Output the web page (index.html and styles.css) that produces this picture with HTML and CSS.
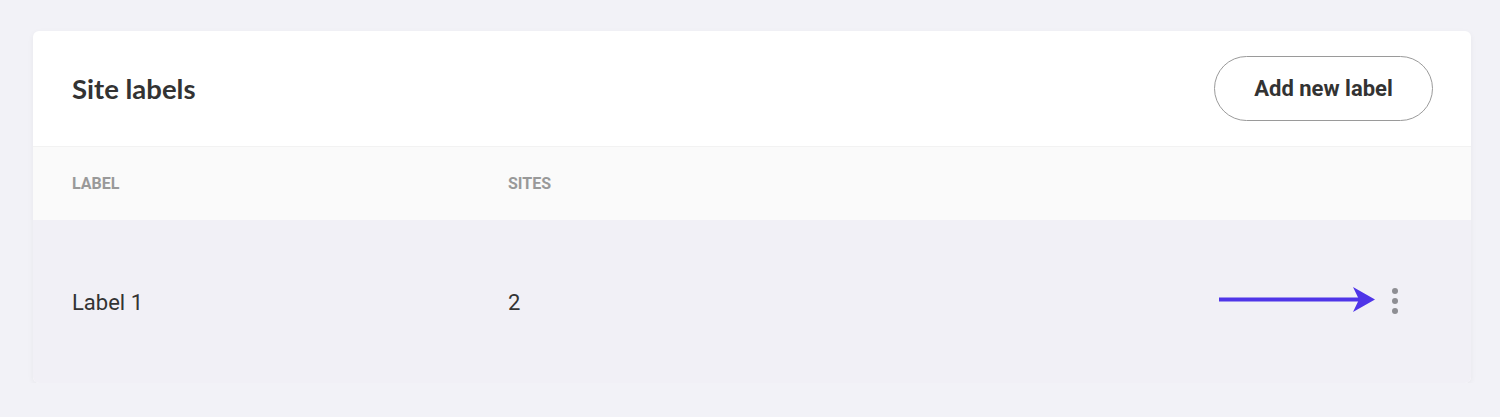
FILE: index.html
```html
<!DOCTYPE html>
<html lang="en">
<head>
<meta charset="UTF-8">
<meta name="viewport" content="width=device-width, initial-scale=1.0">
<title>Site labels</title>
<link rel="stylesheet" href="styles.css">
</head>
<body>

<div class="card">
  <div class="card-header">
    <h2>Site labels</h2>
    <button class="button">Add new label</button>
  </div>

  <div class="table-head">
    <div class="col-label">Label</div>
    <div class="col-sites">Sites</div>
  </div>

  <div class="table-row">
    <div class="col-label">Label 1</div>
    <div class="col-sites">2</div>
    <div class="row-actions">
      <svg class="pointer" width="160" height="28" viewBox="0 0 160 28">
        <rect x="0" y="11.5" width="142" height="4" fill="#4f35e8"/>
        <path d="M134 1 L156 13.5 L134 26 L140 13.5 Z" fill="#4f35e8"/>
      </svg>
      <span class="kebab">
        <i></i><i></i><i></i>
      </span>
    </div>
  </div>
</div>

</body>
</html>
```

FILE: styles.css
```css
body {
  font-family: Roboto, Arial, sans-serif;
  margin: 0;
  padding: 31px 29px 0 33px;
  background-color: #f2f2f7;
  color: #333;
}
.card {
  background-color: #fff;
  border-radius: 6px;
  box-shadow: 0 2px 6px rgba(0, 0, 0, 0.05);
  overflow: hidden;
}
.card-header {
  height: 116px;
  display: flex;
  align-items: center;
  justify-content: space-between;
  padding: 0 38px 0 39px;
  border-bottom: 1px solid #f2f2f2;
  box-sizing: border-box;
}
h2 {
  margin: 0;
  font-family: Lato, "Open Sans", sans-serif;
  font-size: 27.5px;
  font-weight: 700;
  color: #333;
}
.button {
  width: 219px;
  height: 65px;
  border: 1px solid #9a9a9a;
  border-radius: 33px;
  background-color: #fff;
  font-family: Roboto, Arial, sans-serif;
  font-size: 22px;
  font-weight: 700;
  color: #333;
  cursor: pointer;
}
.table-head,
.table-row {
  display: flex;
  align-items: center;
  padding-left: 39px;
  position: relative;
}
.table-head {
  height: 73px;
  background-color: #fafafa;
  font-size: 16px;
  font-weight: 700;
  text-transform: uppercase;
  color: #999;
}
.table-row {
  height: 163px;
  background-color: #f1f0f6;
  font-size: 22px;
  padding-top: 2px;
  box-sizing: border-box;
}
.col-label {
  width: 436px;
}
.col-sites {
  flex: 1;
}
.row-actions {
  display: flex;
  align-items: center;
  gap: 13px;
  margin-right: 73px;
}
.pointer {
  display: block;
  margin-top: -6px;
}
.kebab {
  display: flex;
  flex-direction: column;
  gap: 4px;
  margin-top: -3px;
}
.kebab i {
  display: block;
  width: 6px;
  height: 6px;
  border-radius: 50%;
  background-color: #8e8e93;
}
```
